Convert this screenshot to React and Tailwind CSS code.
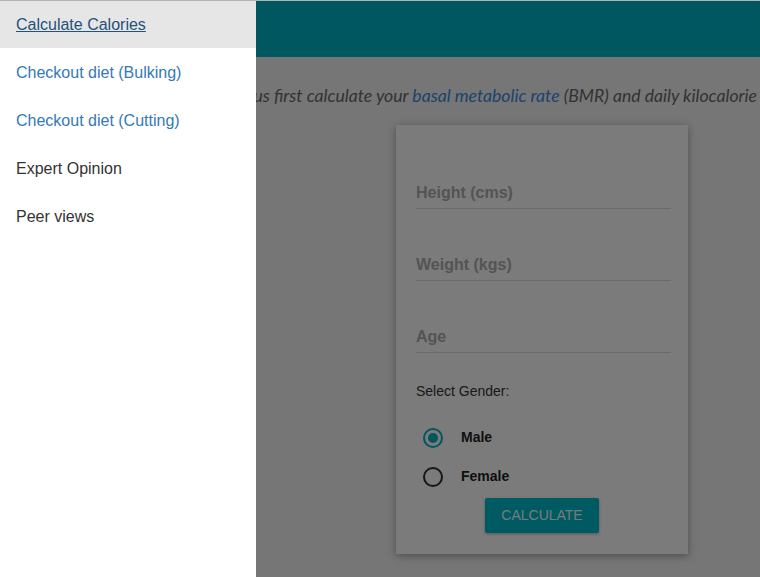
import React from "react";

const menu = [
  { label: "Calculate Calories", active: true },
  { label: "Checkout diet (Bulking)", link: true },
  { label: "Checkout diet (Cutting)", link: true },
  { label: "Expert Opinion" },
  { label: "Peer views" },
];

const Field = ({ label }) => (
  <div className="pt-[47px]">
    <div className="text-[16px] font-bold text-[#a9a9a9] leading-[18px] pb-[6px] border-b border-[#d6d6d6]">
      {label}
    </div>
  </div>
);

const Radio = ({ label, checked }) => (
  <div className="flex items-center h-[39px] pl-[7px]">
    <span
      className={
        checked
          ? "w-[20px] h-[20px] rounded-full border-2 border-[#00acbb] flex items-center justify-center"
          : "w-[20px] h-[20px] rounded-full border-2 border-[#2a2a2a]"
      }
    >
      {checked && <span className="w-[10px] h-[10px] rounded-full bg-[#00acbb]" />}
    </span>
    <span className="ml-[18px] text-[14px] font-bold text-[#1e1e1e]">{label}</span>
  </div>
);

const App = () => {
  return (
    <div className="relative w-[760px] h-[577px] overflow-hidden bg-[#ececec] font-['Liberation_Sans',Arial,sans-serif]">
      {/* top line */}
      <div className="h-px bg-[#b3b3b3] relative z-30" />

      {/* Header */}
      <div className="h-[56px] bg-[#02aebe]" />

      {/* Intro text */}
      <p className="mt-[26px] pl-[227px] whitespace-nowrap text-[17.6px] italic text-[#666] font-['Lato',sans-serif]">
        Let us first calculate your <span className="text-[#3589d6]">basal metabolic rate</span> (BMR) and daily kilocalorie
      </p>

      {/* Card */}
      <div className="ml-[396px] mt-[16px] w-[292px] h-[429px] bg-[#f6f6f6] shadow-[0_2px_8px_rgba(0,0,0,0.35)] pt-[12px] pl-5 pr-[17px]">
        <Field label="Height (cms)" />
        <Field label="Weight (kgs)" />
        <Field label="Age" />
        <div className="mt-[28px] text-[14px] text-[#333]">Select Gender:</div>
        <div className="mt-[16px]">
          <Radio label="Male" checked />
          <Radio label="Female" />
        </div>
        <div className="flex justify-center mt-[2px] pr-[3px]">
          <button className="w-[114px] h-[35px] bg-[#00b4c4] rounded-[2px] text-[14px] text-white/[0.9] shadow-[0_1px_3px_rgba(0,0,0,0.3)]">
            CALCULATE
          </button>
        </div>
      </div>

      {/* Overlay */}
      <div className="absolute inset-0 bg-black/50 z-10" />

      {/* Sidebar */}
      <div className="absolute left-0 top-px bottom-0 w-[256px] bg-white z-20">
        {menu.map((m) => (
          <div
            key={m.label}
            className={
              m.active
                ? "h-[47px] mb-px flex items-center px-4 bg-[#e6e6e6]"
                : "h-[48px] flex items-center px-4"
            }
          >
            <a
              className={
                m.active
                  ? "text-[16px] text-[#23527c] underline"
                  : m.link
                  ? "text-[16px] text-[#337ab7]"
                  : "text-[16px] text-[#333]"
              }
            >
              {m.label}
            </a>
          </div>
        ))}
      </div>
    </div>
  );
};

export default App;
